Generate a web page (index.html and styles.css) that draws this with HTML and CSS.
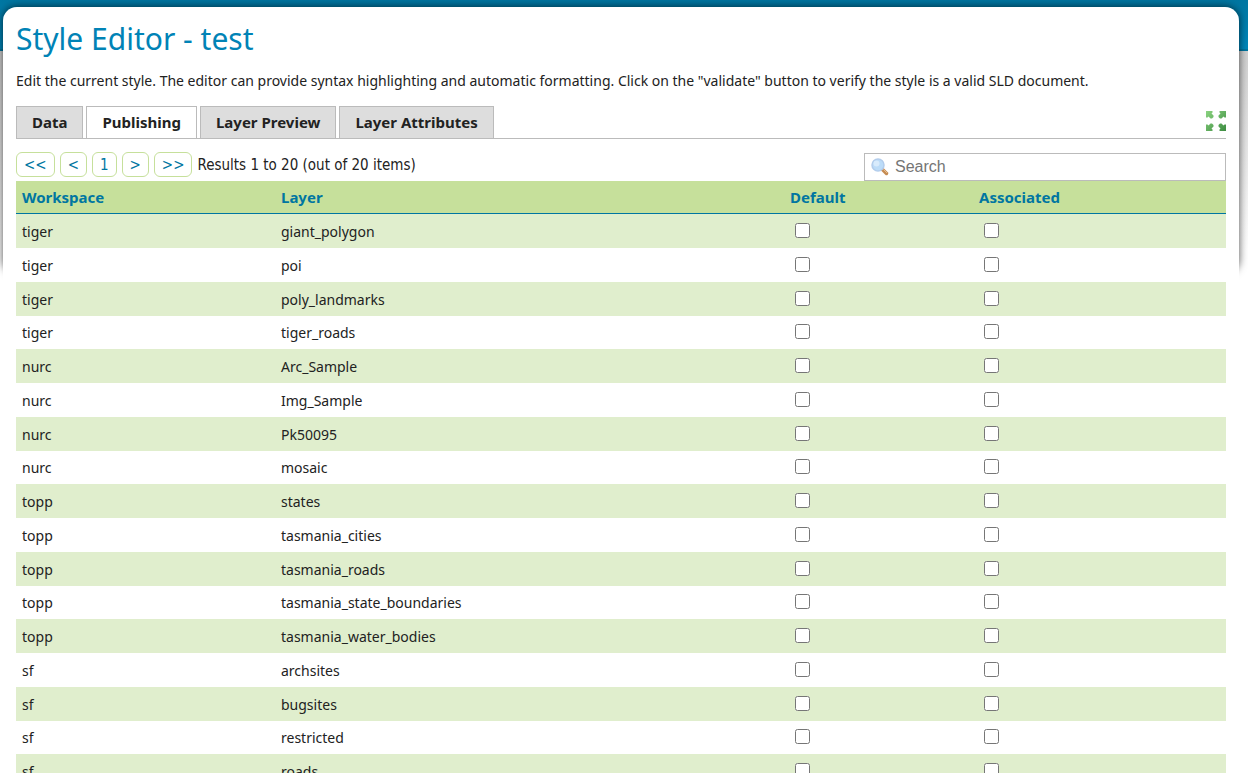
FILE: index.html
```html
<!DOCTYPE html>
<html lang="en">
<head>
<meta charset="utf-8">
<title>Style Editor - test</title>
<link rel="stylesheet" href="styles.css">
</head>
<body>
<main class="page">
  <h1 class="page-title">Style Editor - test</h1>
  <p class="page-intro">Edit the current style. The editor can provide syntax highlighting and automatic formatting. Click on the "validate" button to verify the style is a valid SLD document.</p>

  <nav class="tabs" aria-label="Style sections">
    <a class="tab" href="#data">Data</a>
    <a class="tab tab-selected" href="#publishing" aria-current="page">Publishing</a>
    <a class="tab" href="#preview">Layer Preview</a>
    <a class="tab" href="#attributes">Layer Attributes</a>
    <button class="expand" type="button" aria-label="Toggle fullscreen">
      <svg class="expand-icon" viewBox="0 0 20 20" aria-hidden="true">
        <defs>
          <linearGradient id="leaf" gradientUnits="userSpaceOnUse" x1="0" y1="0" x2="20" y2="20">
            <stop offset="0" stop-color="#8bd380"/>
            <stop offset="1" stop-color="#3d8c41"/>
          </linearGradient>
        </defs>
        <g fill="url(#leaf)">
          <path d="M0 0H6.500V1.500L5.500 2.500L7.500 4.500V6L6 7.500H4.500L2.500 5.500L1.500 6.500H0Z"/>
          <path d="M20 0H13.500V1.500L14.500 2.500L12.500 4.500V6L14 7.500H15.500L17.500 5.500L18.500 6.500H20Z"/>
          <path d="M0 20H6.500V18.500L5.500 17.500L7.500 15.500V14L6 12.500H4.500L2.500 14.500L1.500 13.500H0Z"/>
          <path d="M20 20H13.500V18.500L14.500 17.500L12.500 15.500V14L14 12.500H15.500L17.500 14.500L18.500 13.500H20Z"/>
        </g>
      </svg>
    </button>
  </nav>

  <div class="toolbar">
    <div class="pager">
      <a class="pager-link" href="#first">&lt;&lt;</a>
      <a class="pager-link" href="#prev">&lt;</a>
      <a class="pager-link" href="#1">1</a>
      <a class="pager-link" href="#next">&gt;</a>
      <a class="pager-link" href="#last">&gt;&gt;</a>
      <span class="pager-text">Results 1 to 20 (out of 20 items)</span>
    </div>
    <label class="search">
      <svg class="search-icon" viewBox="0 0 18 18" aria-hidden="true">
        <path d="M11.500 11.500L15.500 15.500" stroke="#c58b52" stroke-width="3.500" stroke-linecap="round"/>
        <path d="M12.500 11.500L16 15" stroke="#e8bd8c" stroke-width="1"/>
        <circle cx="7" cy="7" r="6" fill="#bcdcf8" stroke="#b3cdec" stroke-width="1.500"/>
        <circle cx="5.500" cy="5.500" r="3" fill="#d8ebfc"/>
      </svg>
      <input class="search-input" type="text" placeholder="Search" aria-label="Search">
    </label>
  </div>

  <table class="layers">
    <colgroup><col class="col-workspace"><col class="col-layer"><col class="col-default"><col class="col-associated"></colgroup>
    <thead>
      <tr><th><a href="#ws">Workspace</a></th><th><a href="#layer">Layer</a></th><th><a href="#default">Default</a></th><th><a href="#associated">Associated</a></th></tr>
    </thead>
    <tbody>
      <tr><td>tiger</td><td>giant_polygon</td><td><input type="checkbox" aria-label="Default giant_polygon"></td><td><input type="checkbox" aria-label="Associated giant_polygon"></td></tr>
      <tr><td>tiger</td><td>poi</td><td><input type="checkbox" aria-label="Default poi"></td><td><input type="checkbox" aria-label="Associated poi"></td></tr>
      <tr><td>tiger</td><td>poly_landmarks</td><td><input type="checkbox" aria-label="Default poly_landmarks"></td><td><input type="checkbox" aria-label="Associated poly_landmarks"></td></tr>
      <tr><td>tiger</td><td>tiger_roads</td><td><input type="checkbox" aria-label="Default tiger_roads"></td><td><input type="checkbox" aria-label="Associated tiger_roads"></td></tr>
      <tr><td>nurc</td><td>Arc_Sample</td><td><input type="checkbox" aria-label="Default Arc_Sample"></td><td><input type="checkbox" aria-label="Associated Arc_Sample"></td></tr>
      <tr><td>nurc</td><td>Img_Sample</td><td><input type="checkbox" aria-label="Default Img_Sample"></td><td><input type="checkbox" aria-label="Associated Img_Sample"></td></tr>
      <tr><td>nurc</td><td>Pk50095</td><td><input type="checkbox" aria-label="Default Pk50095"></td><td><input type="checkbox" aria-label="Associated Pk50095"></td></tr>
      <tr><td>nurc</td><td>mosaic</td><td><input type="checkbox" aria-label="Default mosaic"></td><td><input type="checkbox" aria-label="Associated mosaic"></td></tr>
      <tr><td>topp</td><td>states</td><td><input type="checkbox" aria-label="Default states"></td><td><input type="checkbox" aria-label="Associated states"></td></tr>
      <tr><td>topp</td><td>tasmania_cities</td><td><input type="checkbox" aria-label="Default tasmania_cities"></td><td><input type="checkbox" aria-label="Associated tasmania_cities"></td></tr>
      <tr><td>topp</td><td>tasmania_roads</td><td><input type="checkbox" aria-label="Default tasmania_roads"></td><td><input type="checkbox" aria-label="Associated tasmania_roads"></td></tr>
      <tr><td>topp</td><td>tasmania_state_boundaries</td><td><input type="checkbox" aria-label="Default tasmania_state_boundaries"></td><td><input type="checkbox" aria-label="Associated tasmania_state_boundaries"></td></tr>
      <tr><td>topp</td><td>tasmania_water_bodies</td><td><input type="checkbox" aria-label="Default tasmania_water_bodies"></td><td><input type="checkbox" aria-label="Associated tasmania_water_bodies"></td></tr>
      <tr><td>sf</td><td>archsites</td><td><input type="checkbox" aria-label="Default archsites"></td><td><input type="checkbox" aria-label="Associated archsites"></td></tr>
      <tr><td>sf</td><td>bugsites</td><td><input type="checkbox" aria-label="Default bugsites"></td><td><input type="checkbox" aria-label="Associated bugsites"></td></tr>
      <tr><td>sf</td><td>restricted</td><td><input type="checkbox" aria-label="Default restricted"></td><td><input type="checkbox" aria-label="Associated restricted"></td></tr>
      <tr><td>sf</td><td>roads</td><td><input type="checkbox" aria-label="Default roads"></td><td><input type="checkbox" aria-label="Associated roads"></td></tr>
    </tbody>
  </table>
</main>
</body>
</html>
```
FILE: styles.css
```css
* { box-sizing: border-box; }

body {
  margin: 0;
  padding: 7px 9px 0 3px;
  background:
    linear-gradient(#0076a1, #0087bb) 0 0 / 100% 49px no-repeat,
    linear-gradient(#0076a1, #0076a1) 0 49px / 100% 2px no-repeat,
    linear-gradient(#d0d0d0, #fff) 0 51px / 100% 200px no-repeat,
    #fff;
  color: #222;
  font-family: "Noto Sans", Tahoma, sans-serif;
  font-size: 14px;
  line-height: 20px;
}

a { color: #0076a1; text-decoration: none; }

.page {
  position: relative;
  padding: 13px 13px 0;
  border-radius: 14px;
  background: #fff;
}

/* side shadow that fades out below the header */
.page::before {
  content: "";
  position: absolute;
  inset: 0 0 auto;
  z-index: -1;
  height: 266px;
  border-radius: 14px;
  box-shadow: 0 0 9px rgba(0, 0, 0, 0.7);
}

.page-title {
  margin: 0;
  color: #0083b6;
  font-size: 30px;
  font-weight: 400;
  line-height: 38px;
}

.page-intro { margin: 13px 0 15px; }

.tabs {
  display: flex;
  gap: 3px;
  border-bottom: 1px solid #bbb;
}

.tab {
  padding: 5px 15px 6px;
  border: 1px solid #bbb;
  border-bottom: 0;
  background: #ddd;
  color: #222;
  font-size: 15px;
  font-weight: 700;
}

.tab-selected { background: #fff; }

.expand {
  align-self: flex-start;
  margin: 5px 0 0 auto;
  padding: 0;
  border: 0;
  background: none;
}

.expand-icon { display: block; width: 20px; height: 20px; }

.toolbar {
  display: flex;
  justify-content: space-between;
  align-items: flex-end;
  padding-top: 13px;
}

.pager {
  display: flex;
  align-items: center;
  gap: 5px;
  padding-bottom: 4px;
  font-family: "DejaVu Sans Condensed", "DejaVu Sans", sans-serif;
  font-size: 15px;
}

.pager-link {
  padding: 2px 7px 1px;
  border: 1px solid #c6e09b;
  border-radius: 6px;
}

.search {
  display: flex;
  align-items: center;
  width: 362px;
  height: 28px;
  padding: 0 6px 1px;
  border: 1px solid #bbb;
  background: #fff;
}

.search-icon { width: 18px; height: 18px; fill: none; }

.search-input {
  flex: 1;
  min-width: 0;
  padding: 0 0 0 6px;
  border: 0;
  outline: 0;
  background: none;
  font: 16px/20px "Liberation Sans", Arial, sans-serif;
}

.search-input::placeholder { color: #757575; }

.layers {
  width: 100%;
  border-collapse: separate;
  border-spacing: 0;
  table-layout: fixed;
}

.col-workspace { width: 259px; }
.col-default { width: 189px; }
.col-associated { width: 253px; }

.layers th {
  height: 33px;
  padding: 0 6px;
  border-bottom: 1px solid #0076a1;
  background: #c6e09b;
  font-size: 15px;
  text-align: left;
}

.layers td { height: 34px; padding: 1px 6px 0; }
.layers tr:nth-child(4n) td { height: 33px; }
.layers tbody tr:nth-child(odd) { background: #e0eecd; }

.layers input {
  display: block;
  width: 15px;
  height: 15px;
  margin: 0 5px 3px;
}
```
